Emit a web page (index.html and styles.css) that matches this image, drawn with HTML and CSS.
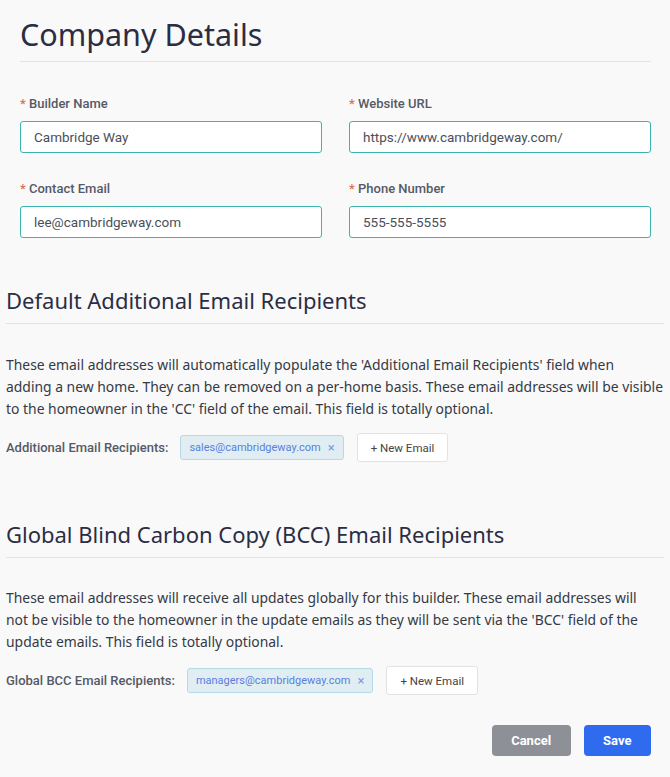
FILE: index.html
```html
<!DOCTYPE html>
<html lang="en">
<head>
    <meta charset="UTF-8">
    <meta name="viewport" content="width=device-width, initial-scale=1.0">
    <title>Company Details</title>
    <link rel="stylesheet" href="styles.css">
</head>
<body>
    <div class="company">
        <h1>Company Details</h1>
        <div class="form-grid">
            <div class="field">
                <label><span class="req">*</span> Builder Name</label>
                <input type="text" value="Cambridge Way">
            </div>
            <div class="field">
                <label><span class="req">*</span> Website URL</label>
                <input type="text" value="https://www.cambridgeway.com/">
            </div>
            <div class="field">
                <label><span class="req">*</span> Contact Email</label>
                <input type="text" value="lee@cambridgeway.com">
            </div>
            <div class="field">
                <label><span class="req">*</span> Phone Number</label>
                <input type="text" value="555-555-5555">
            </div>
        </div>
    </div>

    <div class="section">
        <h2>Default Additional Email Recipients</h2>
        <p>These email addresses will automatically populate the 'Additional Email Recipients' field when<br>
        adding a new home. They can be removed on a per-home basis. These email addresses will be visible<br>
        to the homeowner in the 'CC' field of the email. This field is totally optional.</p>
        <div class="recipients">
            <span class="recipients-label">Additional Email Recipients:</span>
            <span class="tag">sales@cambridgeway.com <span class="tag-close">&times;</span></span>
            <button class="new-email">+ New Email</button>
        </div>
    </div>

    <div class="section section-bcc">
        <h2>Global Blind Carbon Copy (BCC) Email Recipients</h2>
        <p>These email addresses will receive all updates globally for this builder. These email addresses will<br>
        not be visible to the homeowner in the update emails as they will be sent via the 'BCC' field of the<br>
        update emails. This field is totally optional.</p>
        <div class="recipients">
            <span class="recipients-label">Global BCC Email Recipients:</span>
            <span class="tag">managers@cambridgeway.com <span class="tag-close">&times;</span></span>
            <button class="new-email">+ New Email</button>
        </div>
    </div>

    <div class="actions">
        <button class="btn btn-cancel">Cancel</button>
        <button class="btn btn-save">Save</button>
    </div>
</body>
</html>
```

FILE: styles.css
```css
body {
    font-family: Roboto, Arial, sans-serif;
    background-color: #f9f9f9;
    color: #3a3f4a;
    margin: 0;
    padding: 0;
}
.company {
    padding: 14px 19px 0 20px;
}
h1 {
    font-family: "Noto Sans", Arial, sans-serif;
    font-size: 30.5px;
    line-height: 40px;
    font-weight: 400;
    color: #2b2d45;
    margin: 0;
    padding-bottom: 7px;
    border-bottom: 1px solid #e3e3e3;
}
.form-grid {
    display: grid;
    grid-template-columns: 1fr 1fr;
    column-gap: 27px;
    row-gap: 28px;
    margin-top: 34px;
}
.field label {
    display: block;
    font-size: 13px;
    line-height: 16px;
    font-weight: 500;
    color: #555a66;
    margin-bottom: 9px;
}
.req {
    color: #d9734e;
}
.field input {
    width: 100%;
    box-sizing: border-box;
    height: 32px;
    border: 1px solid #3ab5b0;
    border-radius: 3px;
    background: white;
    padding: 0 13px;
    font-family: inherit;
    font-size: 13.5px;
    color: #4b4f5a;
}
.section {
    padding: 0 6px;
    margin-top: 48px;
}
.section-bcc {
    margin-top: 58px;
}
h2 {
    font-family: "Noto Sans", Arial, sans-serif;
    font-size: 22px;
    line-height: 28px;
    font-weight: 400;
    color: #2b2d45;
    margin: 0;
    padding-bottom: 9px;
    border-bottom: 1px solid #e3e3e3;
}
.section p {
    font-family: "Noto Sans", Arial, sans-serif;
    font-size: 13.9px;
    line-height: 22px;
    color: #353a45;
    white-space: nowrap;
    margin: 30px 0 13px 0;
}
.section-bcc p {
    margin-top: 29px;
    margin-bottom: 13px;
}
.recipients {
    display: flex;
    align-items: center;
}
.recipients-label {
    font-size: 13px;
    font-weight: 500;
    color: #555a66;
    margin-right: 12px;
}
.tag {
    display: inline-flex;
    align-items: center;
    height: 25px;
    box-sizing: border-box;
    padding: 0 8px;
    background-color: #e0eef3;
    border: 1px solid #b7d9e4;
    border-radius: 3px;
    font-size: 11px;
    color: #5b7de0;
}
.tag-close {
    margin-left: 7px;
    color: #7a9be0;
    font-size: 13px;
}
.new-email {
    margin-left: 13px;
    height: 29px;
    padding: 0 13px;
    background: white;
    border: 1px solid #e3e3e3;
    border-radius: 3px;
    font-family: inherit;
    font-size: 11.5px;
    color: #444;
}
.actions {
    display: flex;
    justify-content: flex-end;
    gap: 13px;
    padding: 30px 19px 0 0;
}
.btn {
    height: 31px;
    border: none;
    border-radius: 4px;
    font-family: Roboto, Arial, sans-serif;
    font-size: 13px;
    font-weight: bold;
    color: white;
    padding: 0 19.5px;
}
.btn-cancel {
    background-color: #8e9097;
}
.btn-save {
    background-color: #2f6bef;
}
```
